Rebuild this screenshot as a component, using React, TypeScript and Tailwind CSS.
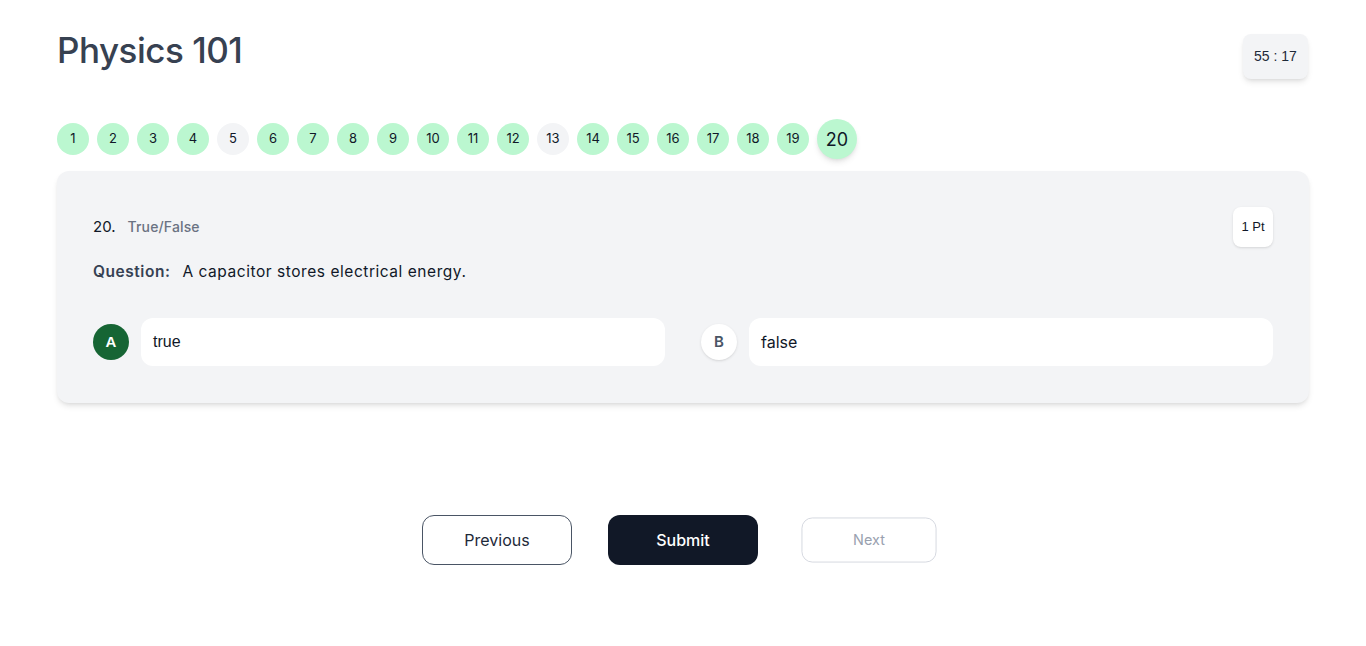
import React from "react";

const answered = [1, 2, 3, 4, 6, 7, 8, 9, 10, 11, 12, 14, 15, 16, 17, 18, 19, 20];

const QuizPage = () => {
  const current = 20;

  return (
    <div className="min-h-screen bg-white px-[57px] pt-[28px] font-['Inter',sans-serif] text-gray-900">
      <div className="flex items-start justify-between">
        <h1 className="text-[35px] font-medium leading-[44px] tracking-[-0.5px] text-[#374151]">
          Physics 101
        </h1>
        <div className="mt-[6px] mr-[1px] flex h-[45px] w-[65px] items-center justify-center rounded-lg bg-gray-100 font-['Liberation_Sans',sans-serif] text-[14px] text-gray-800 shadow-md">
          55 : 17
        </div>
      </div>

      <div className="mt-[40px] flex items-center gap-2">
        {Array.from({ length: 20 }, (_, i) => i + 1).map((n) => {
          const done = answered.includes(n);
          if (n === current) {
            return (
              <div
                key={n}
                className="flex h-10 w-10 items-center justify-center rounded-full bg-[#bbf7d0] text-[18px] shadow-md"
              >
                {n}
              </div>
            );
          }
          return (
            <div
              key={n}
              className={`flex h-8 w-8 items-center justify-center rounded-full text-[13px] ${
                done ? "bg-[#bbf7d0]" : "bg-gray-100"
              }`}
            >
              {n}
            </div>
          );
        })}
      </div>

      <div className="mt-[12px] rounded-xl bg-gray-100 px-9 pt-9 pb-[37px] shadow-md">
        <div className="flex items-center justify-between">
          <div className="flex items-baseline gap-3">
            <span className="text-[15px] font-normal">20.</span>
            <span className="text-[14px] font-medium tracking-[0.01em] text-gray-500">True/False</span>
          </div>
          <div className="flex h-10 w-10 items-center justify-center rounded-lg bg-white font-['Liberation_Sans',sans-serif] text-[13px] shadow-sm">
            1 Pt
          </div>
        </div>

        <div className="mt-[13px] flex items-baseline gap-3 text-[15.5px] tracking-[0.035em]">
          <span className="font-semibold text-gray-700">Question:</span>
          <span>A capacitor stores electrical energy.</span>
        </div>

        <div className="mt-[35px] grid grid-cols-2 gap-9">
          <div className="flex items-center gap-3">
            <div className="flex h-9 w-9 shrink-0 items-center justify-center rounded-full bg-[#166534] font-['Liberation_Sans',sans-serif] text-[15px] font-bold text-white">
              A
            </div>
            <div className="flex h-12 flex-1 items-center rounded-xl bg-white px-3 font-['Liberation_Sans',sans-serif] text-[16px]">
              true
            </div>
          </div>
          <div className="flex items-center gap-3">
            <div className="flex h-9 w-9 shrink-0 items-center justify-center rounded-full bg-white text-[15px] font-semibold text-gray-600 shadow-sm">
              B
            </div>
            <div className="flex h-12 flex-1 items-center rounded-xl bg-white px-3 text-[16px]">
              false
            </div>
          </div>
        </div>
      </div>

      <div className="mt-28 flex items-center justify-center gap-9">
        <button className="h-[50px] w-[150px] rounded-xl border border-gray-600 bg-white text-[16px] text-gray-800">
          Previous
        </button>
        <button className="h-[50px] w-[150px] rounded-xl bg-[#111827] text-[16px] font-medium text-white">
          Submit
        </button>
        <button
          disabled
          className="h-[50px] w-[150px] scale-90 rounded-xl border border-gray-300 bg-white text-[16px] text-gray-400"
        >
          Next
        </button>
      </div>
    </div>
  );
};

export default function App() {
  return <QuizPage />;
}
